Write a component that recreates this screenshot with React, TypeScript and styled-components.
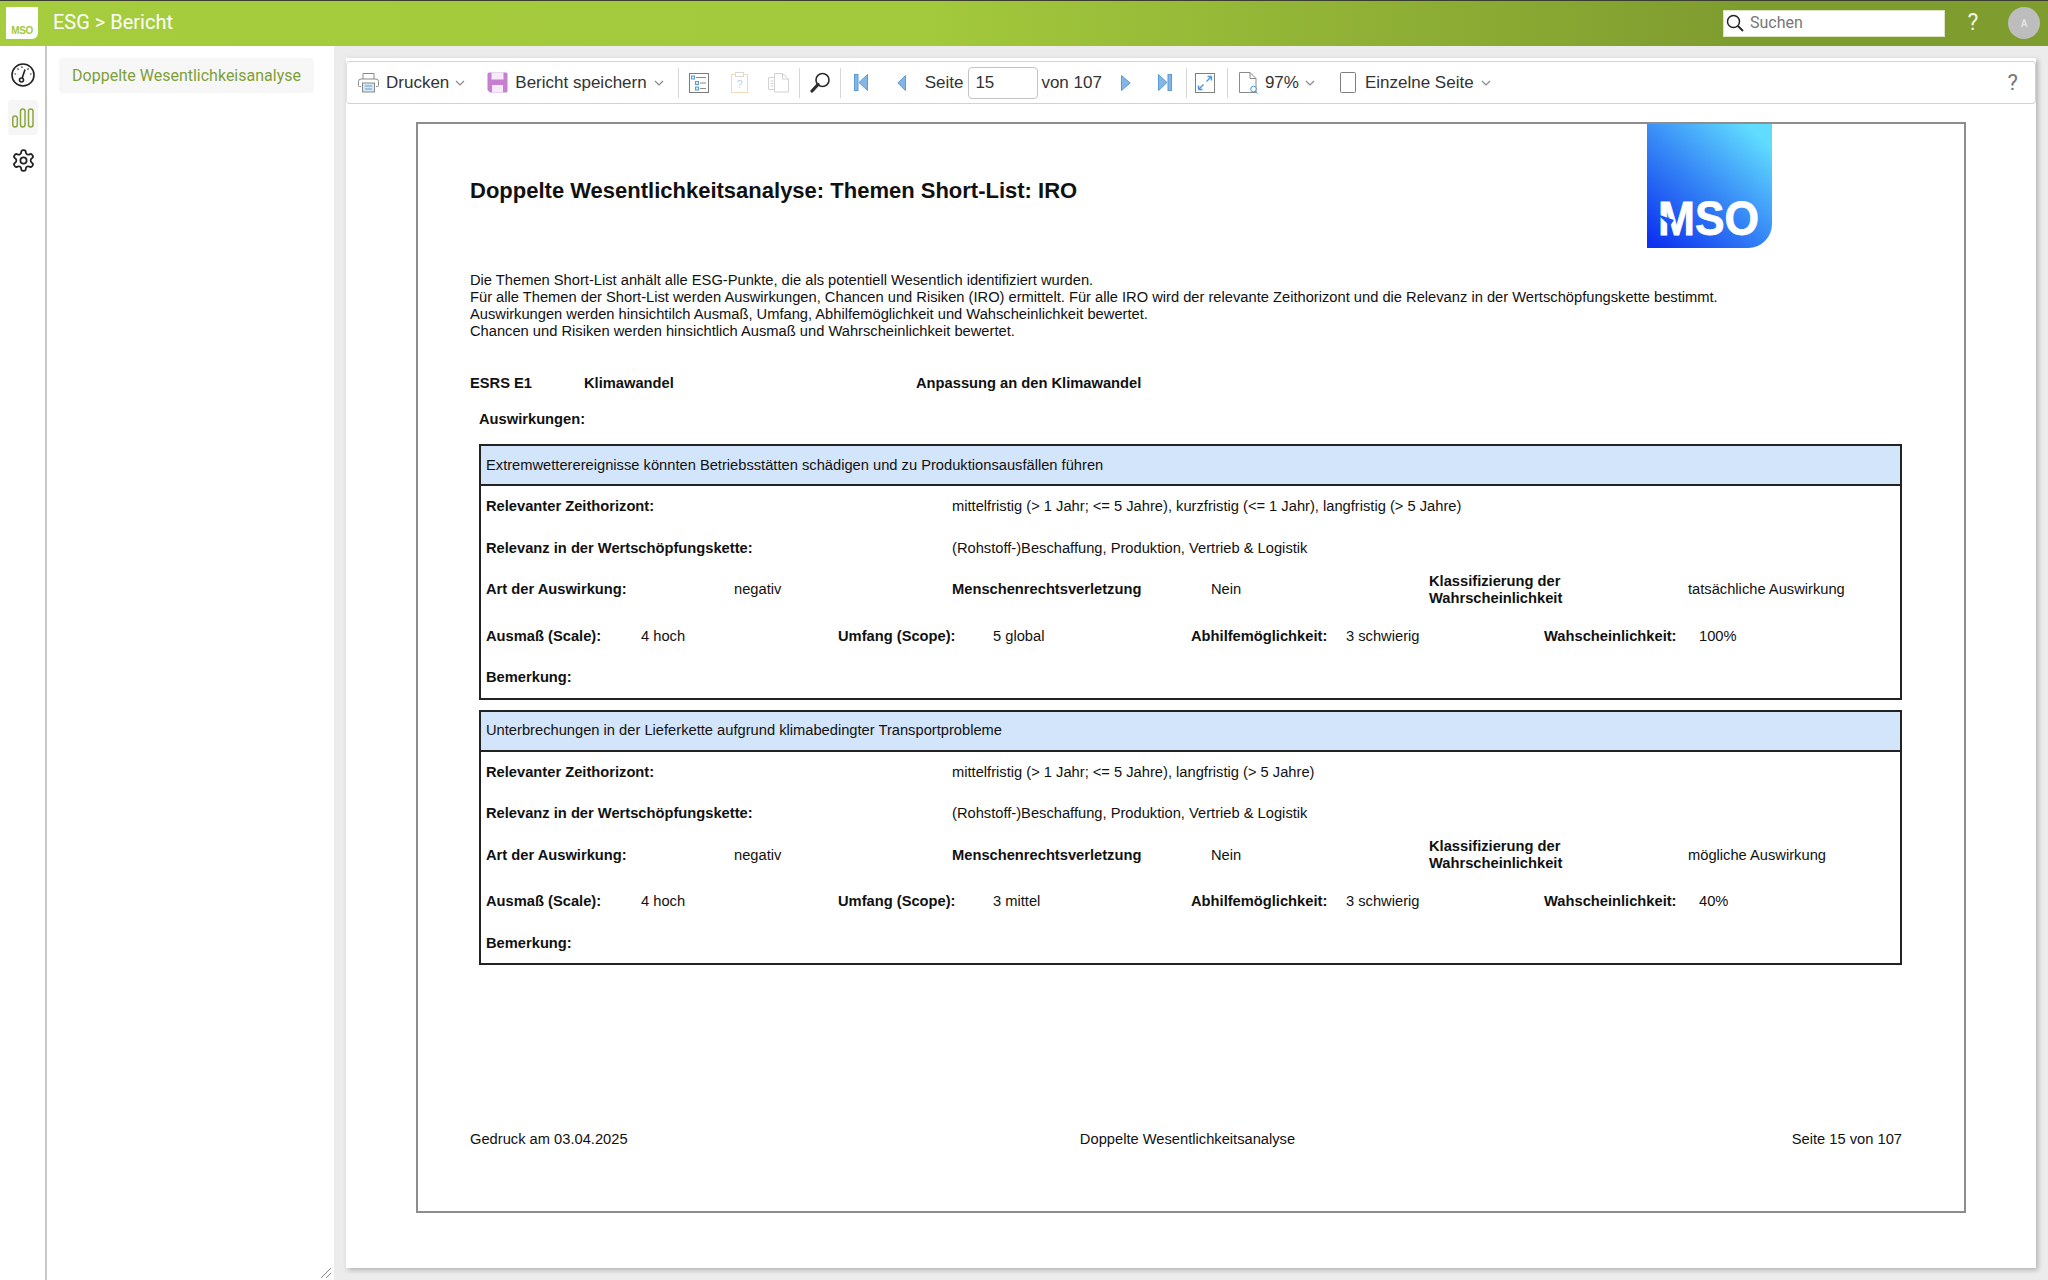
import React from "react";
import styled, { createGlobalStyle } from "styled-components";

const GlobalStyle = createGlobalStyle`
  html, body {
    margin: 0;
    padding: 0;
    background: #ececec;
  }
  * {
    box-sizing: border-box;
  }
`;

const Shell = styled.div`
  width: 2048px;
  height: 1280px;
  overflow: hidden;
  display: flex;
  flex-direction: column;
  font-family: "Liberation Sans", Arial, sans-serif;
`;

const Header = styled.header`
  height: 46px;
  flex: none;
  display: flex;
  align-items: center;
  padding: 0 8px 1px 6px;
  border-top: 1px solid #3a3d30;
  background: linear-gradient(90deg, #a5cd3d 0%, #a3c93c 45%, #7f9c2f 85%, #7f9c2f 100%);
`;

const BrandBox = styled.div`
  width: 32px;
  height: 32px;
  display: flex;
  align-items: flex-end;
  justify-content: center;
  background: #fff;
  border-radius: 0 0 6px 0;
  padding-bottom: 3px;
  color: #a3c93c;
  font: 700 10px "Liberation Sans", sans-serif;
  letter-spacing: -0.4px;
`;

const HeaderTitle = styled.div`
  margin: -2px 0 0 15px;
  flex: 1;
  color: #fff;
  font: 400 20px Roboto, sans-serif;
`;

const SearchBox = styled.label`
  width: 222px;
  height: 27px;
  display: flex;
  align-items: center;
  gap: 6px;
  padding: 0 0 1px 2px;
  background: #fff;
  border: 1px solid #dbe6c0;
  color: #777;
  font: 400 16px Roboto, sans-serif;
`;

const HelpMark = styled.span`
  margin: -2px 0 0 21px;
  width: 14px;
  text-align: center;
  color: #f1f4e6;
  font: 400 23px Roboto, sans-serif;
`;

const Avatar = styled.div`
  margin-left: 28px;
  width: 32px;
  height: 32px;
  border-radius: 50%;
  display: flex;
  align-items: center;
  justify-content: center;
  background: #bdbdbd;
  color: #e4e4e4;
  font: 700 10px Roboto, sans-serif;
`;

const Body = styled.div`
  flex: 1;
  display: flex;
  min-height: 0;
`;

const Rail = styled.nav`
  width: 47px;
  flex: none;
  display: flex;
  flex-direction: column;
  align-items: center;
  padding: 11.5px 0 0 0;
  gap: 7.5px;
  background: #fff;
  border-right: 2px solid #c6c6c6;
`;

const RailButton = styled.div<{ $active?: boolean }>`
  width: 30px;
  height: 35px;
  margin-left: 1px;
  display: flex;
  align-items: center;
  justify-content: center;
  border-radius: 4px;
  background: ${(p) => (p.$active ? "#f6f6f6" : "transparent")};
`;

const SubNav = styled.aside`
  width: 287px;
  flex: none;
  position: relative;
  padding: 12px 20px 0 12px;
  background: #fff;
`;

const SubNavItem = styled.div`
  height: 35px;
  display: flex;
  align-items: center;
  justify-content: center;
  border-radius: 4px;
  background: #f7f7f7;
  color: #7e9f38;
  font: 400 16px Roboto, sans-serif;
`;

const ResizeGrip = styled.svg`
  position: absolute;
  right: 2px;
  bottom: 1px;
`;

const Main = styled.main`
  flex: 1;
  padding: 12px 12px 12px 12px;
  background: #ececec;
  display: flex;
  min-width: 0;
`;

const Panel = styled.section`
  flex: 1;
  display: flex;
  flex-direction: column;
  background: #fff;
  box-shadow: 2px 2px 5px rgba(0, 0, 0, 0.25);
`;

const Toolbar = styled.div`
  height: 43px;
  flex: none;
  margin-top: 3px;
  display: flex;
  align-items: center;
  padding: 0 0 0 11px;
  background: #fff;
  border: 1px solid #d2d2d2;
  border-left-color: #e2e2e2;
  border-radius: 4px;
  color: #333;
  font: 400 17px "Liberation Sans", sans-serif;
`;

const ToolSlot = styled.span<{ $w: number; $ml?: number }>`
  width: ${(p) => p.$w}px;
  margin-left: ${(p) => p.$ml ?? 0}px;
  flex: none;
  display: flex;
  align-items: center;
  justify-content: center;
`;

const ToolLabel = styled.span<{ $ml?: number }>`
  margin-left: ${(p) => p.$ml ?? 0}px;
  flex: none;
  white-space: nowrap;
`;

const ToolSep = styled.span<{ $ml: number }>`
  margin-left: ${(p) => p.$ml}px;
  width: 1px;
  height: 30px;
  flex: none;
  background: #d6d6d6;
`;

const PageInput = styled.div`
  width: 70px;
  height: 32px;
  margin-left: 5px;
  flex: none;
  display: flex;
  align-items: center;
  padding-left: 6px;
  border: 1px solid #c4c4c4;
  border-radius: 4px;
  color: #333;
`;

const ToolHelp = styled.span`
  margin-left: auto;
  margin-right: 17px;
  color: #777;
  font: 400 22px Roboto, sans-serif;
`;

const ReportArea = styled.div`
  flex: 1;
  padding: 18px 70px 55px 70px;
  min-height: 0;
  display: flex;
`;

const ReportPage = styled.article`
  flex: 1;
  display: flex;
  flex-direction: column;
  border: 2px solid #8d8d8d;
  padding: 0 62px 0 52px;
  color: #111;
  font: 400 14.7px/17px "Liberation Sans", Arial, sans-serif;
`;

const ReportHead = styled.div`
  height: 125px;
  flex: none;
  display: flex;
  justify-content: space-between;
`;

const ReportTitle = styled.h1`
  margin: 0;
  padding-top: 54px;
  font: 700 22px/26px "Liberation Sans", Arial, sans-serif;
  color: #111;
`;

const LogoMark = styled.svg`
  margin-right: 130px;
  flex: none;
`;

const Intro = styled.p`
  margin: 23px 0 0 0;
  white-space: nowrap;
`;

const TopicRow = styled.div`
  margin-top: 35px;
  display: grid;
  grid-template-columns: 114px 332px auto;
  font-weight: 700;
`;

const SectionLabel = styled.div`
  margin: 19px 0 0 9px;
  font-weight: 700;
`;

const ImpactBox = styled.div`
  margin: 16px 0 0 9px;
  height: 255.5px;
  flex: none;
  display: flex;
  flex-direction: column;
  border: 2px solid #222;
  & + & {
    margin-top: 10px;
  }
`;

const ImpactTitle = styled.div`
  height: 40px;
  flex: none;
  display: flex;
  align-items: center;
  padding-left: 5px;
  background: #d3e5fb;
  border-bottom: 2px solid #222;
`;

const FieldRow = styled.div<{ $cols: string; $gapBelow?: number }>`
  height: 41.5px;
  flex: none;
  display: grid;
  grid-template-columns: ${(p) => p.$cols};
  align-items: center;
  padding-left: 5px;
  margin-bottom: ${(p) => p.$gapBelow ?? 0}px;
`;

const FieldLabel = styled.span`
  font-weight: 700;
`;

const FieldValue = styled.span`
  white-space: nowrap;
`;

const ReportFooter = styled.footer`
  margin-top: auto;
  margin-bottom: 63px;
  display: grid;
  grid-template-columns: 1fr auto 1fr;
`;

const FooterCenter = styled.span`
  padding-left: 3px;
`;

const FooterRight = styled.span`
  text-align: right;
`;

const Chevron = ({ ml }: { ml: number }) => (
  <ToolSlot $w={10} $ml={ml}>
    <svg width="10" height="6" viewBox="0 0 10 6" fill="none" stroke="#888" strokeWidth="1.2">
      <path d="M1 1l4 4 4-4" />
    </svg>
  </ToolSlot>
);

const PrinterIcon = () => (
  <svg width="21" height="21" viewBox="0 0 21 21" fill="none">
    <path d="M5 7V1.5h11V7" stroke="#8a8a8a" />
    <path d="M3 14.5H1.5a1 1 0 0 1-1-1V9.5a2.5 2.5 0 0 1 2.5-2.5h15a2.5 2.5 0 0 1 2.5 2.5v4a1 1 0 0 1-1 1H18" stroke="#8a8a8a" />
    <rect x="4.5" y="11" width="12" height="9" fill="#d5e6f6" stroke="#8a8a8a" />
    <path d="M7 14h7M7 17h7" stroke="#6a9ecb" />
  </svg>
);

const SaveIcon = () => (
  <svg width="21" height="21" viewBox="0 0 21 21">
    <path d="M0.5 2A1.5 1.5 0 0 1 2 0.5h17A1.5 1.5 0 0 1 20.5 2v17a1.5 1.5 0 0 1-1.5 1.5H3L0.5 18z" fill="#c47fcf" />
    <rect x="4.5" y="0.5" width="12" height="7" fill="#f6eaf8" />
    <rect x="5" y="13" width="11" height="7.5" fill="#f6eaf8" />
  </svg>
);

const ListIcon = () => (
  <svg width="20" height="20" viewBox="0 0 20 20" fill="none">
    <rect x="0.5" y="0.5" width="19" height="19" fill="#fff" stroke="#7b7b7b" />
    <rect x="2.5" y="3" width="3" height="3" fill="#dcebf8" stroke="#5b9bd5" />
    <rect x="6.5" y="8.5" width="3" height="3" fill="#dcebf8" stroke="#5b9bd5" />
    <rect x="6.5" y="14" width="3" height="3" fill="#dcebf8" stroke="#5b9bd5" />
    <path d="M7 4.5h10M11 10h6M11 15.5h6" stroke="#8a8a8a" />
  </svg>
);

const ClipboardIcon = () => (
  <svg width="17" height="21" viewBox="0 0 17 21" fill="none">
    <rect x="0.5" y="2.5" width="16" height="18" fill="#fff" stroke="#f2d9b8" />
    <rect x="4.5" y="0.5" width="8" height="4" fill="#fff" stroke="#d9d9d9" />
    <text x="8.5" y="16" textAnchor="middle" fontSize="11" fill="#bcd4ec" fontFamily="Liberation Sans">?</text>
  </svg>
);

const CopiesIcon = () => (
  <svg width="21" height="21" viewBox="0 0 21 21" fill="none" stroke="#d2d2d2">
    <path d="M6.5 5.5H1a.5.5 0 0 0-.5.5v11a.5.5 0 0 0 .5.5h5.5z" />
    <path d="M6.5 1.5h8l6 5.5v13h-14z" fill="#fff" />
    <path d="M14.5 1.5V7h6" />
    <path d="M2.5 9h3M2.5 11.5h3M2.5 14h3" />
  </svg>
);

const MagnifierIcon = () => (
  <svg width="20" height="21" viewBox="0 0 20 21" fill="none" stroke="#2c2c2c">
    <circle cx="12.5" cy="8" r="6.5" strokeWidth="1.6" />
    <path d="M8 12.5L2 19" strokeWidth="3.2" strokeLinecap="round" />
  </svg>
);

const arrowFill = "#85b5e5";
const arrowStroke = "#5b9bd5";

const FirstIcon = () => (
  <svg width="14" height="17" viewBox="0 0 14 17">
    <rect x="0.5" y="0.5" width="3.5" height="16" fill={arrowFill} stroke={arrowStroke} />
    <path d="M13.5 0.5v16L5 8.5z" fill={arrowFill} stroke={arrowStroke} />
  </svg>
);

const PrevIcon = () => (
  <svg width="9" height="16" viewBox="0 0 9 16">
    <path d="M8.5 0.5v15L0.8 8z" fill={arrowFill} stroke={arrowStroke} />
  </svg>
);

const NextIcon = () => (
  <svg width="10" height="16" viewBox="0 0 10 16">
    <path d="M0.5 0.5v15L9.2 8z" fill={arrowFill} stroke={arrowStroke} />
  </svg>
);

const LastIcon = () => (
  <svg width="14" height="17" viewBox="0 0 14 17">
    <path d="M0.5 0.5v16L9 8.5z" fill={arrowFill} stroke={arrowStroke} />
    <rect x="10" y="0.5" width="3.5" height="16" fill={arrowFill} stroke={arrowStroke} />
  </svg>
);

const ExpandIcon = () => (
  <svg width="20" height="20" viewBox="0 0 20 20" fill="none">
    <rect x="0.5" y="0.5" width="19" height="19" stroke="#808080" />
    <path d="M11.5 8.5L16.5 3.5M16.5 3.5H12.5M16.5 3.5V7.5M8.5 11.5L3.5 16.5M3.5 16.5H7.5M3.5 16.5V12.5" stroke="#4a96d9" strokeWidth="1.4" />
  </svg>
);

const PageZoomIcon = () => (
  <svg width="20" height="22" viewBox="0 0 20 22" fill="none">
    <path d="M0.5 0.5h10.5l6 6v14h-16.5z" fill="#fff" stroke="#8a8a8a" />
    <path d="M11 0.5V6.5h6" stroke="#8a8a8a" />
    <circle cx="14.5" cy="17" r="2.8" fill="#fff" stroke="#4a96d9" />
    <path d="M16.5 19.2l2 2.3" stroke="#4a96d9" />
  </svg>
);

const SinglePageIcon = () => (
  <svg width="16" height="21" viewBox="0 0 16 21" fill="none">
    <rect x="0.5" y="0.5" width="15" height="20" rx="1" fill="#fff" stroke="#7d7d7d" />
  </svg>
);

const GaugeIcon = () => (
  <svg width="24" height="24" viewBox="0 0 24 24" fill="none" stroke="#222" strokeWidth="1.6">
    <circle cx="12" cy="12" r="11" />
    <circle cx="10.5" cy="17" r="2" />
    <path d="M11.2 15L14 6.5" />
    <path d="M11 3.5v1.5M6.5 5.5l1 1.2M3.5 11H5M17.5 5.5l-1 1.2M20.5 11H19" strokeWidth="1.2" />
  </svg>
);

const BarsIcon = () => (
  <svg width="22" height="20" viewBox="0 0 22 20" fill="none" stroke="#8aa63c" strokeWidth="1.5">
    <rect x="0.8" y="8" width="4.5" height="11" rx="2.2" />
    <rect x="8.5" y="1" width="4.5" height="18" rx="2.2" />
    <rect x="16.5" y="1" width="4.5" height="18" rx="2.2" />
  </svg>
);

const CogIcon = () => (
  <svg width="25" height="25" viewBox="0 0 24 24" fill="none" stroke="#222" strokeWidth="1.7" strokeLinecap="round" strokeLinejoin="round">
    <path d="M12.22 2h-.44a2 2 0 0 0-2 2v.18a2 2 0 0 1-1 1.73l-.43.25a2 2 0 0 1-2 0l-.15-.08a2 2 0 0 0-2.73.73l-.22.38a2 2 0 0 0 .73 2.73l.15.1a2 2 0 0 1 1 1.72v.51a2 2 0 0 1-1 1.74l-.15.09a2 2 0 0 0-.73 2.73l.22.38a2 2 0 0 0 2.73.73l.15-.08a2 2 0 0 1 2 0l.43.25a2 2 0 0 1 1 1.73V20a2 2 0 0 0 2 2h.44a2 2 0 0 0 2-2v-.18a2 2 0 0 1 1-1.73l.43-.25a2 2 0 0 1 2 0l.15.08a2 2 0 0 0 2.73-.73l.22-.39a2 2 0 0 0-.73-2.73l-.15-.08a2 2 0 0 1-1-1.74v-.5a2 2 0 0 1 1-1.74l.15-.09a2 2 0 0 0 .73-2.73l-.22-.38a2 2 0 0 0-2.73-.73l-.15.08a2 2 0 0 1-2 0l-.43-.25a2 2 0 0 1-1-1.73V4a2 2 0 0 0-2-2z" />
    <circle cx="12" cy="12" r="3" />
  </svg>
);

const SearchGlass = () => (
  <svg width="18" height="18" viewBox="0 0 18 18" fill="none" stroke="#222">
    <circle cx="7.5" cy="7.5" r="6" strokeWidth="1.5" />
    <path d="M12 12l5 5" strokeWidth="1.8" />
  </svg>
);

const Logo = () => (
  <LogoMark width="125" height="124" viewBox="0 0 125 124">
    <defs>
      <linearGradient id="msoLogo" x1="0.9" y1="0.1" x2="0.1" y2="1">
        <stop offset="0" stopColor="#60dcff" />
        <stop offset="0.5" stopColor="#3585f6" />
        <stop offset="1" stopColor="#0d33ef" />
      </linearGradient>
    </defs>
    <path d="M0 0H125V100a24 24 0 0 1-24 24H0z" fill="url(#msoLogo)" />
    <text x="11" y="111" fontFamily="'Liberation Sans', sans-serif" fontWeight="700" fontSize="49" textLength="101" lengthAdjust="spacingAndGlyphs" stroke="#fff" strokeWidth="0.8" fill="#fff">MSO</text>
    <path d="M10 90l17 6-4 6z" fill="#1c55f5" />
  </LogoMark>
);

type Field = { label: React.ReactNode; value: string };

const ArtCols = "248px 218px 259px 218px 259px auto";
const ScaleCols = "155px 197px 155px 198px 155px 198px 155px auto";

const Impact = ({
  title,
  horizon,
  klass,
  scale,
  prob,
}: {
  title: string;
  horizon: string;
  klass: string;
  scale: string;
  prob: string;
}) => {
  const art: Field[] = [
    { label: "Art der Auswirkung:", value: "negativ" },
    { label: "Menschenrechtsverletzung", value: "Nein" },
    { label: <>Klassifizierung der<br />Wahrscheinlichkeit</>, value: klass },
  ];
  const measures: Field[] = [
    { label: "Ausmaß (Scale):", value: "4 hoch" },
    { label: "Umfang (Scope):", value: scale },
    { label: "Abhilfemöglichkeit:", value: "3 schwierig" },
    { label: "Wahscheinlichkeit:", value: prob },
  ];
  return (
    <ImpactBox>
      <ImpactTitle>{title}</ImpactTitle>
      <FieldRow $cols="466px auto">
        <FieldLabel>Relevanter Zeithorizont:</FieldLabel>
        <FieldValue>{horizon}</FieldValue>
      </FieldRow>
      <FieldRow $cols="466px auto">
        <FieldLabel>Relevanz in der Wertschöpfungskette:</FieldLabel>
        <FieldValue>(Rohstoff-)Beschaffung, Produktion, Vertrieb &amp; Logistik</FieldValue>
      </FieldRow>
      <FieldRow $cols={ArtCols} $gapBelow={5}>
        {art.map((f, i) => (
          <React.Fragment key={i}>
            <FieldLabel>{f.label}</FieldLabel>
            <FieldValue>{f.value}</FieldValue>
          </React.Fragment>
        ))}
      </FieldRow>
      <FieldRow $cols={ScaleCols}>
        {measures.map((f, i) => (
          <React.Fragment key={i}>
            <FieldLabel>{f.label}</FieldLabel>
            <FieldValue>{f.value}</FieldValue>
          </React.Fragment>
        ))}
      </FieldRow>
      <FieldRow $cols="auto">
        <FieldLabel>Bemerkung:</FieldLabel>
      </FieldRow>
    </ImpactBox>
  );
};

const App = () => {
  return (
    <Shell>
      <GlobalStyle />
      <Header>
        <BrandBox>MSO</BrandBox>
        <HeaderTitle>ESG &gt; Bericht</HeaderTitle>
        <SearchBox>
          <SearchGlass />
          Suchen
        </SearchBox>
        <HelpMark>?</HelpMark>
        <Avatar>A</Avatar>
      </Header>
      <Body>
        <Rail>
          <RailButton><GaugeIcon /></RailButton>
          <RailButton $active><BarsIcon /></RailButton>
          <RailButton><CogIcon /></RailButton>
        </Rail>
        <SubNav>
          <SubNavItem>Doppelte Wesentlichkeisanalyse</SubNavItem>
          <ResizeGrip width="12" height="12" viewBox="0 0 12 12" fill="none" stroke="#888">
            <path d="M1 11L11 1M6 11l5-5" />
          </ResizeGrip>
        </SubNav>
        <Main>
          <Panel>
            <Toolbar>
              <ToolSlot $w={21}><PrinterIcon /></ToolSlot>
              <ToolLabel $ml={7}>Drucken</ToolLabel>
              <Chevron ml={6} />
              <ToolSlot $w={21} $ml={22}><SaveIcon /></ToolSlot>
              <ToolLabel $ml={7}>Bericht speichern</ToolLabel>
              <Chevron ml={7} />
              <ToolSep $ml={14} />
              <ToolSlot $w={20} $ml={10}><ListIcon /></ToolSlot>
              <ToolSlot $w={17} $ml={22}><ClipboardIcon /></ToolSlot>
              <ToolSlot $w={21} $ml={20}><CopiesIcon /></ToolSlot>
              <ToolSep $ml={10} />
              <ToolSlot $w={20} $ml={10}><MagnifierIcon /></ToolSlot>
              <ToolSep $ml={10} />
              <ToolSlot $w={14} $ml={13}><FirstIcon /></ToolSlot>
              <ToolSlot $w={9} $ml={29}><PrevIcon /></ToolSlot>
              <ToolLabel $ml={19}>Seite</ToolLabel>
              <PageInput>15</PageInput>
              <ToolLabel $ml={3}>von 107</ToolLabel>
              <ToolSlot $w={10} $ml={19}><NextIcon /></ToolSlot>
              <ToolSlot $w={14} $ml={27}><LastIcon /></ToolSlot>
              <ToolSep $ml={14} />
              <ToolSlot $w={20} $ml={8}><ExpandIcon /></ToolSlot>
              <ToolSep $ml={12} />
              <ToolSlot $w={20} $ml={11}><PageZoomIcon /></ToolSlot>
              <ToolLabel $ml={6}>97%</ToolLabel>
              <Chevron ml={6} />
              <ToolSlot $w={16} $ml={25}><SinglePageIcon /></ToolSlot>
              <ToolLabel $ml={9}>Einzelne Seite</ToolLabel>
              <Chevron ml={7} />
              <ToolHelp>?</ToolHelp>
            </Toolbar>
            <ReportArea>
              <ReportPage>
                <ReportHead>
                  <ReportTitle>Doppelte Wesentlichkeitsanalyse: Themen Short-List: IRO</ReportTitle>
                  <Logo />
                </ReportHead>
                <Intro>
                  Die Themen Short-List anhält alle ESG-Punkte, die als potentiell Wesentlich identifiziert wurden.
                  <br />
                  Für alle Themen der Short-List werden Auswirkungen, Chancen und Risiken (IRO) ermittelt. Für alle IRO wird der relevante Zeithorizont und die Relevanz in der Wertschöpfungskette bestimmt.
                  <br />
                  Auswirkungen werden hinsichtilch Ausmaß, Umfang, Abhilfemöglichkeit und Wahscheinlichkeit bewertet.
                  <br />
                  Chancen und Risiken werden hinsichtlich Ausmaß und Wahrscheinlichkeit bewertet.
                </Intro>
                <TopicRow>
                  <span>ESRS E1</span>
                  <span>Klimawandel</span>
                  <span>Anpassung an den Klimawandel</span>
                </TopicRow>
                <SectionLabel>Auswirkungen:</SectionLabel>
                <Impact
                  title="Extremwetterereignisse könnten Betriebsstätten schädigen und zu Produktionsausfällen führen"
                  horizon="mittelfristig (> 1 Jahr; <= 5 Jahre), kurzfristig (<= 1 Jahr), langfristig (> 5 Jahre)"
                  klass="tatsächliche Auswirkung"
                  scale="5 global"
                  prob="100%"
                />
                <Impact
                  title="Unterbrechungen in der Lieferkette aufgrund klimabedingter Transportprobleme"
                  horizon="mittelfristig (> 1 Jahr; <= 5 Jahre), langfristig (> 5 Jahre)"
                  klass="mögliche Auswirkung"
                  scale="3 mittel"
                  prob="40%"
                />
                <ReportFooter>
                  <span>Gedruck am 03.04.2025</span>
                  <FooterCenter>Doppelte Wesentlichkeitsanalyse</FooterCenter>
                  <FooterRight>Seite 15 von 107</FooterRight>
                </ReportFooter>
              </ReportPage>
            </ReportArea>
          </Panel>
        </Main>
      </Body>
    </Shell>
  );
};

export default App;
